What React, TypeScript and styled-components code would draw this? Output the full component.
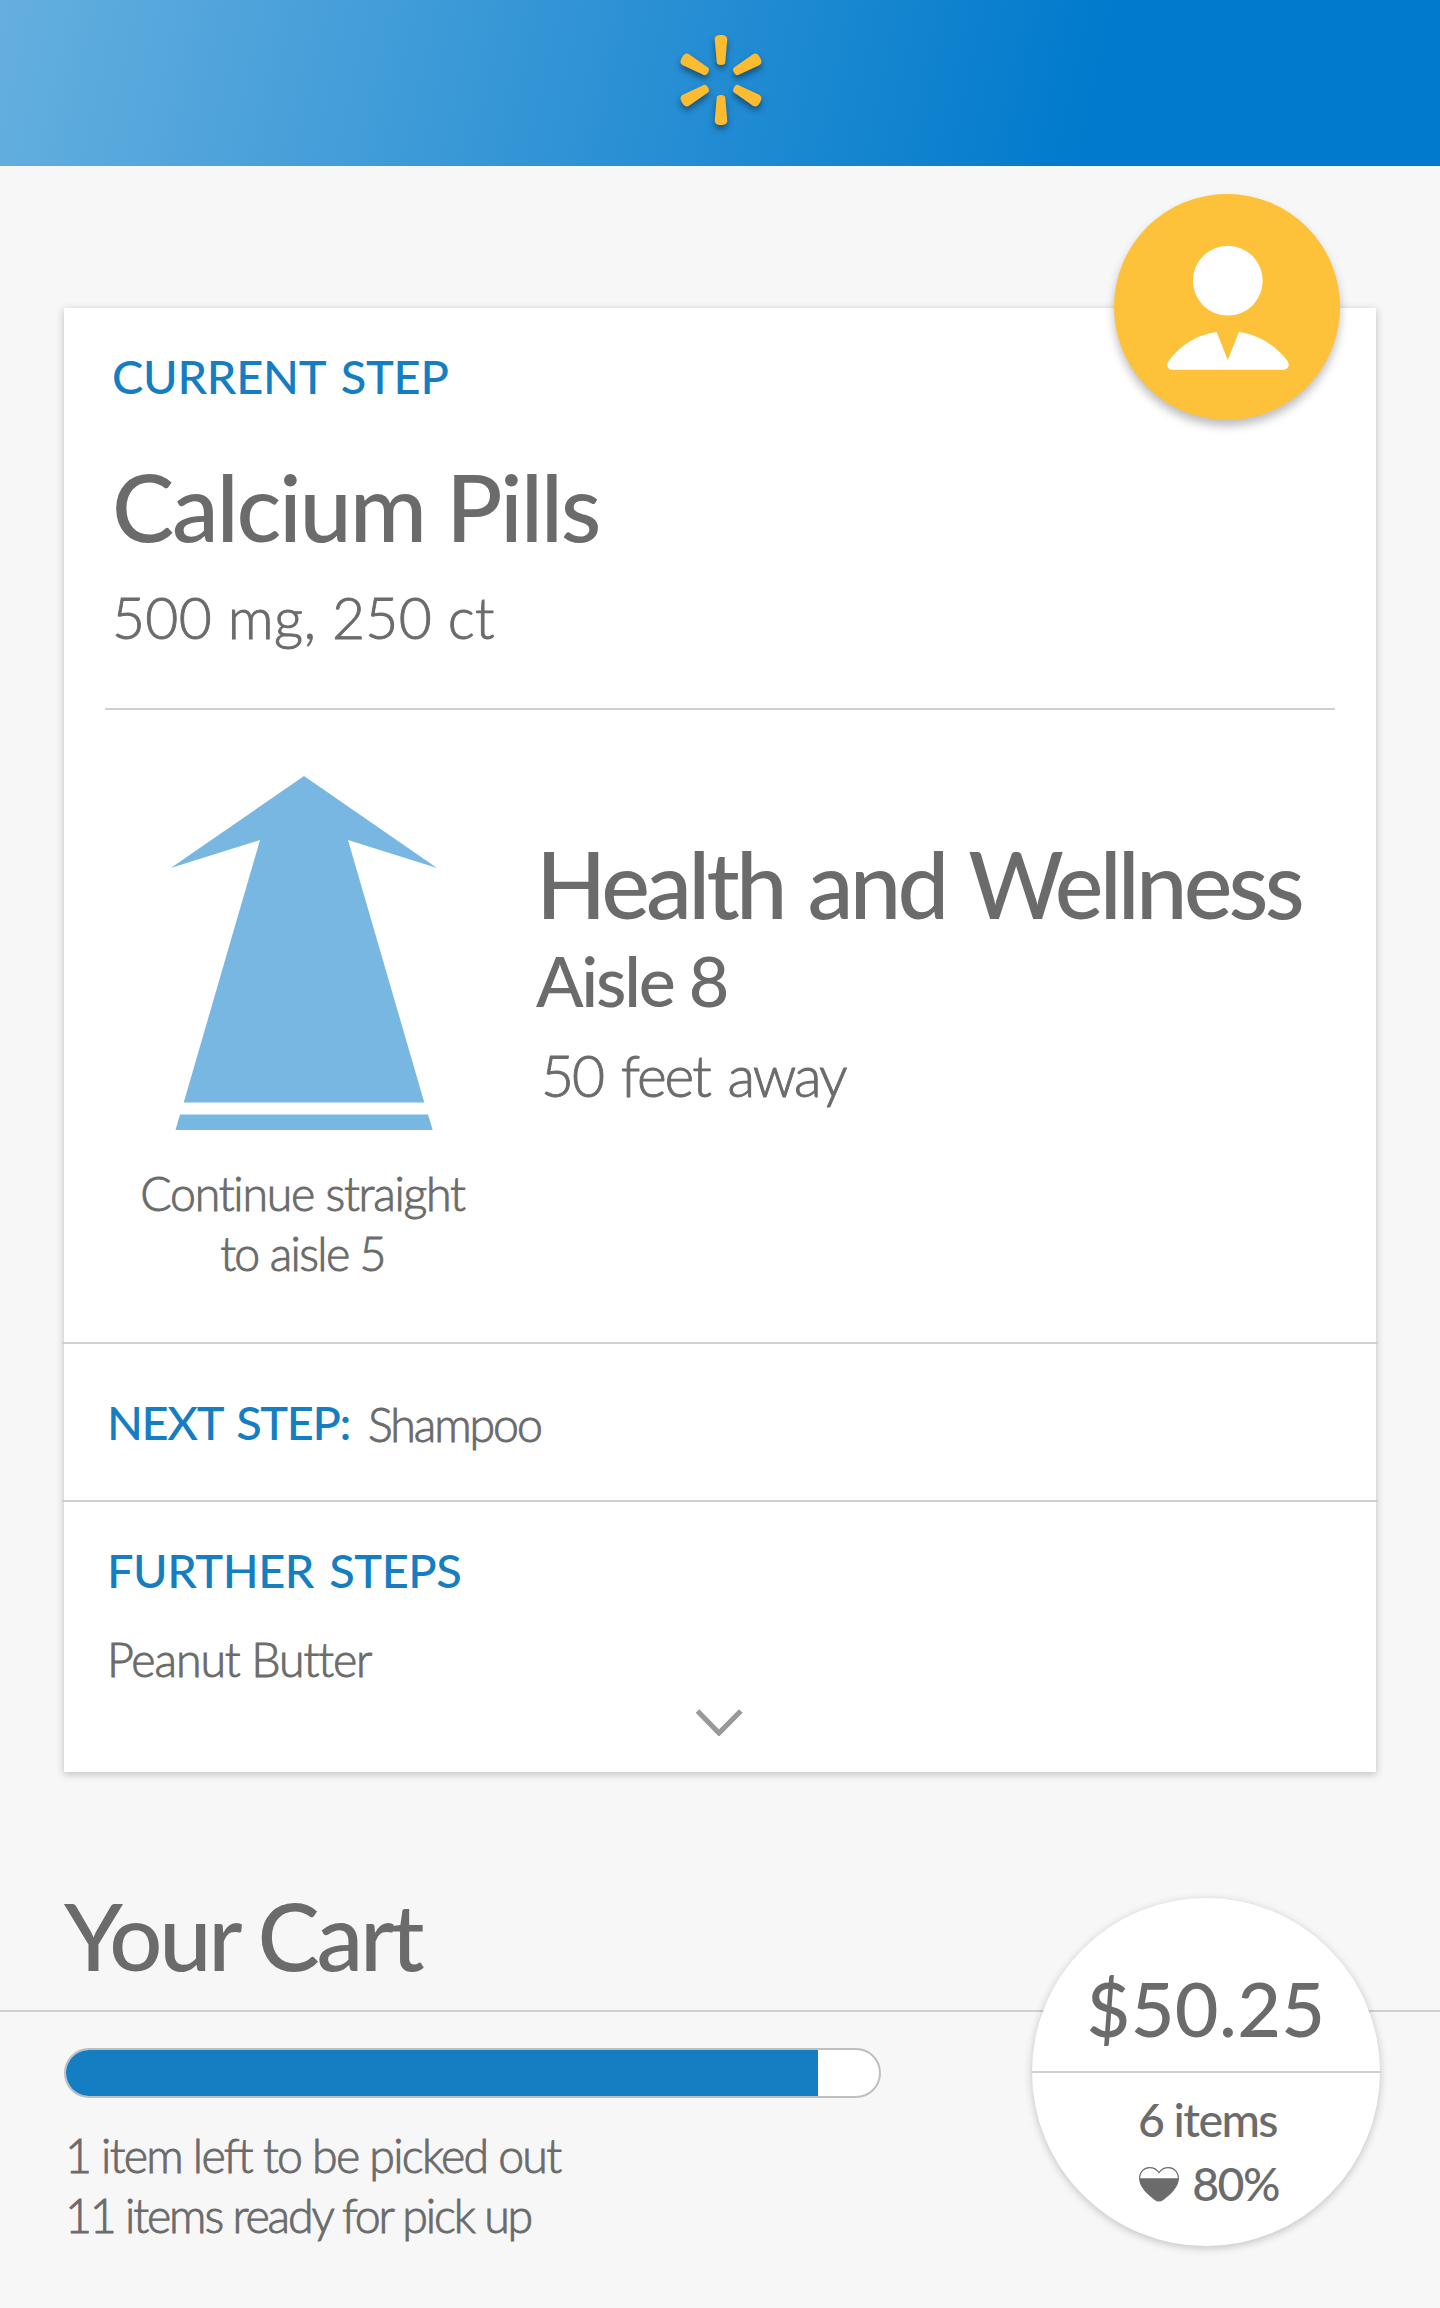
import React from 'react';
import styled, { createGlobalStyle } from 'styled-components';

const color = {
  page: '#f7f7f7',
  blue: '#157ec3',
  arrow: '#79b7e3',
  text: '#6b6b6b',
  rule: '#d0d0d0',
  yellow: '#fdc13a',
};

const GlobalStyle = createGlobalStyle`
  *, *::before, *::after { box-sizing: border-box; }
  body {
    margin: 0;
    background: ${color.page};
    color: ${color.text};
    font-family: Lato, 'Open Sans', sans-serif;
  }
  h1, h2, h3, p { margin: 0; }
`;

const Screen = styled.div`
  width: 1440px;
  height: 2308px;
  overflow: hidden;
  background: ${color.page};
`;

const Header = styled.header`
  display: flex;
  justify-content: center;
  height: 166px;
  padding: 20px 0 0 2px;
  background: linear-gradient(102.5deg, #65afdf 0%, #007acc 76%);
`;

const SparkSvg = styled.svg`
  width: 120px;
  height: 120px;
  filter: drop-shadow(0 4px 3px rgba(0, 0, 0, 0.42));
`;

const Card = styled.main`
  position: relative;
  width: 1312px;
  height: 1464px;
  margin: 142px 64px 0;
  background: #fff;
  box-shadow: 0 2px 8px rgba(0, 0, 0, 0.24);
`;

const Avatar = styled.div`
  position: absolute;
  top: -114px;
  right: 36px;
  width: 226px;
  height: 226px;
  border-radius: 50%;
  background: ${color.yellow};
  box-shadow: 0 6px 10px rgba(0, 0, 0, 0.26);
`;

const Current = styled.section`
  display: flex;
  flex-direction: column;
  height: 1034px;
  padding: 40px 41px 0 48px;
`;

const Label = styled.h3<{ $spacing: number }>`
  color: ${color.blue};
  font-size: 47px;
  font-weight: 500;
  line-height: 56px;
  letter-spacing: ${(p) => p.$spacing}px;
  word-spacing: 4px;
  white-space: nowrap;
`;

const Title = styled.h1`
  margin-top: 46px;
  font-size: 93.5px;
  font-weight: 500;
  line-height: 112px;
  letter-spacing: -2.25px;
  white-space: nowrap;
`;

const Detail = styled.p<{ $spacing: number }>`
  font-size: 57px;
  font-weight: 300;
  line-height: 68px;
  letter-spacing: ${(p) => p.$spacing}px;
  -webkit-text-stroke: 0.9px ${color.text};
  white-space: nowrap;
`;

const Dosage = styled(Detail)`
  margin: 21px 0 -1px;
`;

const Distance = styled(Detail)`
  margin: 19px 0 0 5px;
  word-spacing: 4.5px;
`;

const Copy = styled.p<{ $spacing: number }>`
  font-size: 46.5px;
  font-weight: 300;
  line-height: 60px;
  letter-spacing: ${(p) => p.$spacing}px;
  -webkit-text-stroke: 0.9px ${color.text};
  white-space: nowrap;
`;

const InsetRule = styled.div`
  flex: none;
  height: 2px;
  margin: 58px 0 0 -7px;
  background: ${color.rule};
`;

const CardRule = styled.div`
  height: 2px;
  margin: 0 -2px;
  background: ${color.rule};
`;

const Directions = styled.div`
  display: flex;
  gap: 43px;
`;

const Heading = styled.div`
  display: flex;
  flex-direction: column;
  align-items: center;
  width: 381px;
  padding-top: 66px;
`;

const ArrowSvg = styled.svg`
  width: 268px;
  height: 354px;
  margin: 0 -3px 33px 0;
  fill: ${color.arrow};
`;

const Place = styled.div`
  padding-top: 119px;
`;

const Department = styled.h2`
  font-size: 92px;
  font-weight: 500;
  line-height: 110px;
  letter-spacing: -3.8px;
  word-spacing: 4.5px;
  white-space: nowrap;
`;

const Aisle = styled.h3`
  font-size: 70px;
  font-weight: 500;
  line-height: 83px;
  letter-spacing: -2.28px;
`;

const Next = styled.section`
  display: flex;
  align-items: flex-start;
  gap: 18px;
  height: 156px;
  padding: 50px 43px 0;
`;

const Further = styled.section`
  display: flex;
  flex-direction: column;
  gap: 31px;
  height: 270px;
  padding: 40px 45px 0 43px;
`;

const ChevronSvg = styled.svg`
  align-self: center;
  width: 48px;
  height: 28px;
  margin-top: -12px;
`;

const Cart = styled.section`
  position: relative;
  padding-top: 107px;
`;

const CartTitle = styled.h2`
  margin-left: 64px;
  font-size: 93.5px;
  font-weight: 500;
  line-height: 112px;
  letter-spacing: -3.3px;
`;

const CartRule = styled.div`
  height: 2px;
  margin-top: 19px;
  background: ${color.rule};
`;

const Track = styled.div`
  width: 817px;
  height: 50px;
  margin: 36px 0 27px 64px;
  overflow: hidden;
  border: 2px solid #bfbfbf;
  border-radius: 25px;
  background: #fff;
`;

const Fill = styled.div`
  width: 752px;
  height: 100%;
  background: ${color.blue};
`;

const Status = styled.div`
  padding-left: 65px;
`;

const Total = styled.aside`
  position: absolute;
  top: 126px;
  left: 1032px;
  display: flex;
  flex-direction: column;
  align-items: center;
  width: 348px;
  height: 348px;
  padding-top: 65px;
  border-radius: 50%;
  background: #fff;
  box-shadow: 0 2px 8px rgba(0, 0, 0, 0.22);
`;

const Price = styled.p`
  font-size: 75.5px;
  font-weight: 500;
  line-height: 90px;
  letter-spacing: 0.34px;
`;

const TotalRule = styled.div`
  width: 350px;
  height: 2px;
  margin: 18px 0 16px;
  background: ${color.rule};
`;

const Stat = styled.p`
  display: flex;
  align-items: center;
  gap: 13px;
  margin: 0 0 4px 3px;
  font-size: 46.5px;
  font-weight: 500;
  line-height: 60px;
  letter-spacing: -1.6px;
  white-space: nowrap;
`;

const Rating = styled(Stat)`
  margin-left: 6px;
`;

const HeartSvg = styled.svg`
  width: 40px;
  height: 35px;
  margin-top: 2px;
`;

const petal =
  'M-6.3 -40.5C-6.3 -43.8 -4 -45 0 -45S6.3 -43.8 6.3 -40.5L4.3 -18C4.2 -15.8 2.7 -15 0 -15S-4.2 -15.8 -4.3 -18Z';

const Spark = () => (
  <SparkSvg viewBox="-60 -60 120 120" fill="#fdbb30">
    {[0, 60, 120, 180, 240, 300].map((angle) => (
      <path key={angle} d={petal} transform={`rotate(${angle})`} />
    ))}
  </SparkSvg>
);

const Person = () => (
  <svg width="226" height="226" viewBox="0 0 226 226" fill="#fff">
    <circle cx="113.8" cy="86.7" r="34.9" />
    <path d="M102.7 138L113.7 166L125 138C144 140.5 161.500 151 173.500 167C176.500 171 173.500 175.700 169.500 175.700H58.500C54 175.700 51.500 171 54.500 167C66.500 151 84 140 102.700 138Z" />
  </svg>
);

const heart =
  'M20 5.800C17.500 1.800 13.500 .6 10.500 .6C5 .6 .6 5 .6 11C.6 20 9 27 16 32.500C18.500 34.400 21.500 34.400 24 32.500C31 27 39.400 20 39.400 11C39.400 5 35 .6 29.500 .6C26.500 .6 22.500 1.800 20 5.800Z';

const Heart = () => (
  <HeartSvg viewBox="0 0 40 35">
    <clipPath id="heart-level">
      <rect x="0" y="11.3" width="40" height="24" />
    </clipPath>
    <path d={heart} fill="none" stroke={color.text} strokeWidth="1.1" />
    <path d={heart} fill={color.text} clipPath="url(#heart-level)" />
  </HeartSvg>
);

export default function App() {
  return (
    <Screen>
      <GlobalStyle />
      <Header>
        <Spark />
      </Header>

      <Card>
        <Current>
          <Label $spacing={-0.25}>CURRENT STEP</Label>
          <Title>Calcium Pills</Title>
          <Dosage $spacing={0.3}>500 mg, 250 ct</Dosage>
          <InsetRule />
          <Directions>
            <Heading>
              <ArrowSvg viewBox="170 776 268 354">
                <path d="M304 776L437 868L348 840L424.300 1102.500H183.700L260 840L170.700 868Z" />
                <path d="M180 1114.500H428L432.700 1130H175.500Z" />
              </ArrowSvg>
              <Copy $spacing={-1.26}>Continue straight</Copy>
              <Copy $spacing={-1.65}>to aisle 5</Copy>
            </Heading>
            <Place>
              <Department>Health and Wellness</Department>
              <Aisle>Aisle 8</Aisle>
              <Distance $spacing={-2.1}>50 feet away</Distance>
            </Place>
          </Directions>
        </Current>
        <CardRule />
        <Next>
          <Label $spacing={-1.4}>NEXT STEP:</Label>
          <Copy $spacing={-2.1}>Shampoo</Copy>
        </Next>
        <CardRule />
        <Further>
          <Label $spacing={-0.5}>FURTHER STEPS</Label>
          <Copy $spacing={-1.1}>Peanut Butter</Copy>
          <ChevronSvg viewBox="695 1708 48 28">
            <path d="M697.500 1711L719 1733L740.800 1711" fill="none" stroke="#999" strokeWidth="5.200" />
          </ChevronSvg>
        </Further>
        <Avatar>
          <Person />
        </Avatar>
      </Card>

      <Cart>
        <CartTitle>Your Cart</CartTitle>
        <CartRule />
        <Track>
          <Fill />
        </Track>
        <Status>
          <Copy $spacing={-1.75}>1 item left to be picked out</Copy>
          <Copy $spacing={-2.15}>11 items ready for pick up</Copy>
        </Status>
        <Total>
          <Price>$50.25</Price>
          <TotalRule />
          <Stat>6 items</Stat>
          <Rating>
            <Heart />
            80%
          </Rating>
        </Total>
      </Cart>
    </Screen>
  );
}
